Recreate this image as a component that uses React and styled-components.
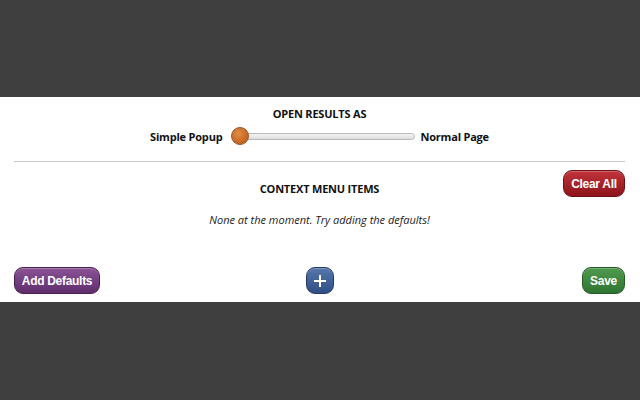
import React from 'react';
import styled, { createGlobalStyle } from 'styled-components';

const Global = createGlobalStyle`
  html, body {
    margin: 0;
    height: 100%;
    background: #3f3f3f;
  }
  #root {
    height: 100%;
  }
`;

const Page = styled.div`
  height: 400px;
  padding-top: 97px;
  box-sizing: border-box;
`;

const Panel = styled.div`
  background: #fff;
  height: 205px;
  padding: 0 15px 0 14px;
  box-sizing: border-box;
  display: flex;
  flex-direction: column;
  font-family: "Open Sans", "DejaVu Sans", sans-serif;
  color: #111;
`;

const Heading = styled.div`
  text-align: center;
  font-size: 11px;
  font-weight: 700;
  letter-spacing: -0.2px;
  margin-top: ${p => p.$top || 0}px;
`;

const SliderRow = styled.div`
  display: flex;
  align-items: center;
  justify-content: center;
  gap: 5px;
  margin-top: 8px;
  font-size: 11px;
  font-weight: 700;
  letter-spacing: -0.2px;
`;

const Track = styled.div`
  position: relative;
  width: 180px;
  height: 5px;
  border: 1px solid #b9b9b9;
  border-radius: 4px;
  background: linear-gradient(#f4f4f4, #dcdcdc);
  margin-left: 6px;
`;

const Thumb = styled.div`
  position: absolute;
  left: -3px;
  top: -7px;
  width: 18px;
  height: 18px;
  border-radius: 50%;
  background: radial-gradient(circle at 40% 35%, #e28c48, #c4651f 70%);
  border: 1px solid #9a5420;
  box-sizing: border-box;
`;

const Divider = styled.hr`
  border: none;
  border-top: 1px solid #c8c8c8;
  margin: 17px 0 0;
`;

const MenuHeader = styled.div`
  display: grid;
  grid-template-columns: 1fr auto 1fr;
  align-items: start;
  margin-top: 8px;
`;

const Empty = styled.div`
  text-align: center;
  font-size: 11px;
  font-style: italic;
  margin-top: 15px;
  color: #222;
`;

const Footer = styled.div`
  margin-top: auto;
  margin-bottom: 8px;
  display: grid;
  grid-template-columns: 1fr auto 1fr;
  align-items: center;
`;

const colors = {
  red: ['#c0343a', '#8e141b', '#6e0f14'],
  purple: ['#8a5396', '#5f2d6c', '#4a2152'],
  blue: ['#5577aa', '#2f4f84', '#22396a'],
  green: ['#4f9a4f', '#2f7532', '#235a25'],
};

const Button = styled.button`
  font-family: "Liberation Sans", Arial, sans-serif;
  font-weight: 700;
  font-size: 12px;
  letter-spacing: -0.3px;
  color: #fff;
  height: 27px;
  width: ${p => (p.$w ? `${p.$w}px` : 'auto')};
  padding: 0 6px;
  border-radius: 9px;
  border: 1px solid ${p => colors[p.$tone][2]};
  background: linear-gradient(${p => colors[p.$tone][0]}, ${p => colors[p.$tone][1]});
  box-shadow: inset 0 1px 0 rgba(255,255,255,0.25);
  justify-self: ${p => p.$align || 'center'};
  display: flex;
  align-items: center;
  justify-content: center;
`;

export default function App() {
  return (
    <Page>
      <Global />
      <Panel>
        <Heading $top={9}>OPEN RESULTS AS</Heading>
        <SliderRow>
          <span>Simple Popup</span>
          <Track>
            <Thumb />
          </Track>
          <span>Normal Page</span>
        </SliderRow>
        <Divider />
        <MenuHeader>
          <span />
          <Heading $top={11}>CONTEXT MENU ITEMS</Heading>
          <Button $tone="red" $align="end" $w={62}>Clear All</Button>
        </MenuHeader>
        <Empty>None at the moment. Try adding the defaults!</Empty>
        <Footer>
          <Button $tone="purple" $align="start" $w={86}>Add Defaults</Button>
          <Button $tone="blue" $w={28}>
            <svg width="14" height="14" viewBox="0 0 14 14">
              <path d="M7 1v12M1 7h12" stroke="#fff" strokeWidth="2" />
            </svg>
          </Button>
          <Button $tone="green" $align="end" $w={43}>Save</Button>
        </Footer>
      </Panel>
    </Page>
  );
}
